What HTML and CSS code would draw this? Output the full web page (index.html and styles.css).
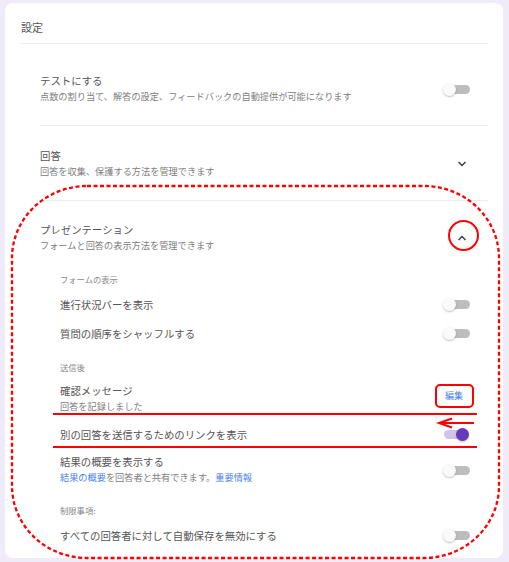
FILE: index.html
```html
<!DOCTYPE html>
<html lang="ja">
<head>
  <meta charset="UTF-8">
  <meta name="viewport" content="width=device-width, initial-scale=1.0">
  <title>設定</title>
  <link rel="stylesheet" href="styles.css">
</head>
<body>
<div class="page">
  <div class="card">
    <div class="card-head">設定</div>

    <div class="section section-first">
      <div class="section-head">
        <div class="text">
          <div class="title">テストにする</div>
          <div class="sub">点数の割り当て、解答の設定、フィードバックの自動提供が可能になります</div>
        </div>
        <span class="toggle"></span>
      </div>
    </div>

    <div class="section">
      <div class="section-head">
        <div class="text">
          <div class="title">回答</div>
          <div class="sub">回答を収集、保護する方法を管理できます</div>
        </div>
        <svg class="chevron" width="10" height="6" viewBox="0 0 10 6"><polyline points="1.5,1 5,4.5 8.5,1" /></svg>
      </div>
    </div>

    <div class="section section-open">
      <div class="section-head">
        <div class="text">
          <div class="title">プレゼンテーション</div>
          <div class="sub">フォームと回答の表示方法を管理できます</div>
        </div>
        <svg class="chevron" width="10" height="6" viewBox="0 0 10 6"><polyline points="1.5,5 5,1.5 8.5,5" /></svg>
      </div>
      <div class="section-body">
        <div class="group-label first">フォームの表示</div>
        <div class="row">
          <span class="title">進行状況バーを表示</span>
          <span class="toggle"></span>
        </div>
        <div class="row">
          <span class="title">質問の順序をシャッフルする</span>
          <span class="toggle"></span>
        </div>

        <div class="group-label">送信後</div>
        <div class="row row-sub">
          <div class="text">
            <div class="title">確認メッセージ</div>
            <div class="sub">回答を記録しました</div>
          </div>
          <span class="text-btn">編集</span>
        </div>
        <div class="row">
          <span class="title">別の回答を送信するためのリンクを表示</span>
          <span class="toggle on"></span>
        </div>
        <div class="row row-sub">
          <div class="text">
            <div class="title">結果の概要を表示する</div>
            <div class="sub"><a href="#">結果の概要</a>を回答者と共有できます。<a href="#">重要情報</a></div>
          </div>
          <span class="toggle"></span>
        </div>

        <div class="group-label">制限事項:</div>
        <div class="row">
          <span class="title">すべての回答者に対して自動保存を無効にする</span>
          <span class="toggle"></span>
        </div>
      </div>
    </div>
  </div>

  <!-- 赤いマーク -->
  <svg class="marks" width="509" height="562" viewBox="0 0 509 562">
    <rect class="dash" x="12" y="186" width="487" height="372" rx="75" ry="72" />
    <circle cx="463.5" cy="235.5" r="14.5" />
    <rect x="436" y="385" width="37" height="22" rx="4" />
    <line x1="53" y1="414" x2="477" y2="414" />
    <line x1="53" y1="447" x2="477" y2="447" />
    <line x1="439" y1="423" x2="474" y2="423" />
    <polyline points="452,418.5 439,423 452,427.5" />
  </svg>
</div>
</body>
</html>
```

FILE: styles.css
```css
body {
  margin: 0;
  background-color: #f0ebf8;
  font-family: "Noto Sans CJK JP", "Noto Sans", sans-serif;
  color: #555555;
}
.page {
  position: relative;
  width: 509px;
  height: 562px;
  padding: 3px 6px 0 5px;
  box-sizing: border-box;
}
.card {
  background-color: white;
  border-radius: 8px;
  padding: 0 15px 8px 16px;
}
.card-head {
  height: 41px;
  padding-top: 17px;
  box-sizing: border-box;
  font-size: 11px;
  line-height: 14px;
  border-bottom: 1px solid #eeeeee;
}
.section {
  margin-left: 19px;
  border-bottom: 1px solid #ececec;
}
.section-open {
  border-bottom: none;
}
.section-head {
  display: flex;
  align-items: center;
  justify-content: space-between;
  padding: 23px 18px 21px 0;
}
.section-first .section-head {
  padding-top: 30px;
}
.section-open .section-head {
  padding: 22px 18px 0 0;
}
.title {
  font-size: 10.4px;
  line-height: 14px;
  color: #555555;
}
.sub {
  font-size: 9.2px;
  line-height: 16px;
  color: #808080;
}
.sub a {
  color: #4a80e8;
  text-decoration: none;
}
.chevron {
  margin-right: 3px;
}
.chevron polyline {
  fill: none;
  stroke: #3c4043;
  stroke-width: 1.5;
}
.section-body {
  padding-left: 20px;
}
.group-label {
  font-size: 8.3px;
  line-height: 12px;
  color: #8a8a8a;
  margin: 13px 0 5px;
}
.group-label.first {
  margin-top: 20px;
}
.row {
  display: flex;
  align-items: center;
  justify-content: space-between;
  height: 29px;
  padding-right: 18px;
}
.row-sub {
  height: auto;
  padding-top: 6px;
  padding-bottom: 6px;
}
.toggle {
  position: relative;
  width: 27px;
  height: 13px;
  flex: none;
}
.toggle::before {
  content: "";
  position: absolute;
  left: 5px;
  top: 2px;
  width: 22px;
  height: 9px;
  border-radius: 5px;
  background-color: #bdbdbd;
}
.toggle::after {
  content: "";
  position: absolute;
  left: 0;
  top: 0;
  width: 13px;
  height: 13px;
  border-radius: 50%;
  background-color: #fafafa;
  box-shadow: 0 1px 2px rgba(0, 0, 0, 0.25);
}
.toggle.on::before {
  left: 1px;
  background-color: #d1c4e9;
}
.toggle.on::after {
  left: 13px;
  background-color: #673ab7;
}
.text-btn {
  font-size: 9px;
  line-height: 14px;
  color: #4a80e8;
  padding: 4px 8px;
  margin-top: -6px;
  margin-right: -1px;
}
.marks {
  position: absolute;
  top: 0;
  left: 0;
  pointer-events: none;
}
.marks * {
  fill: none;
  stroke: #ff0000;
  stroke-width: 2;
}
.marks .dash {
  stroke-width: 2.3;
  stroke-dasharray: 4 2.5;
}
```
